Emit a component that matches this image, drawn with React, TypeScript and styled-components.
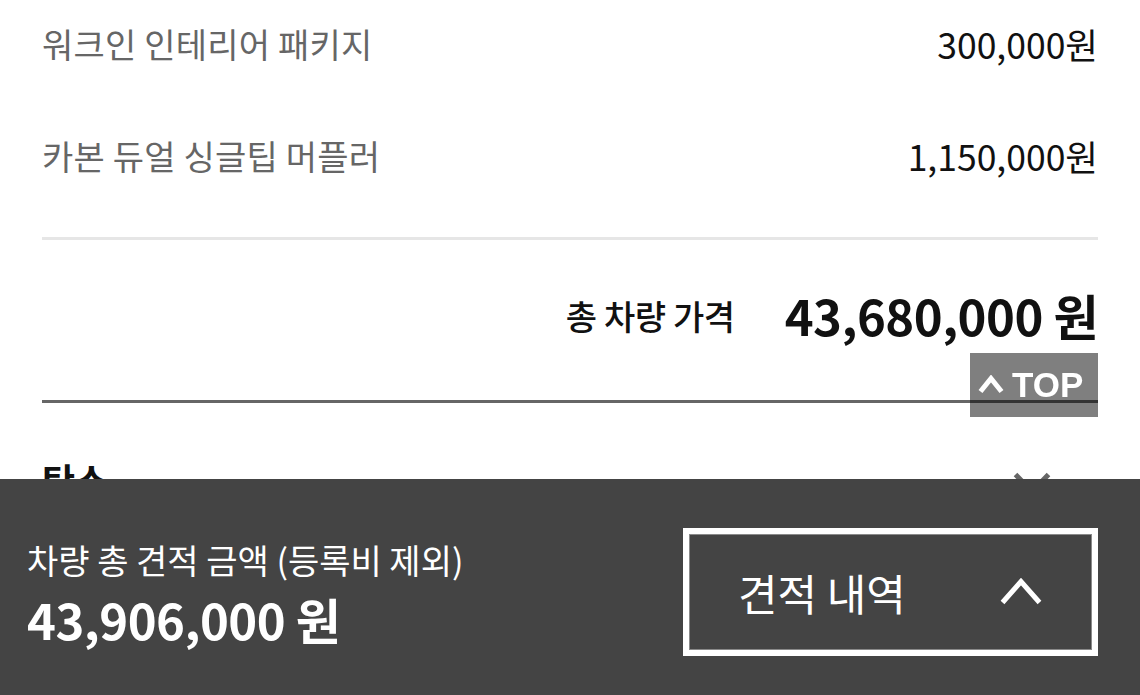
import * as React from 'react'
import styled, { createGlobalStyle } from 'styled-components'

const GlobalStyle = createGlobalStyle`
  html, body {
    margin: 0;
    padding: 0;
    background: #fff;
    overflow: hidden;
  }
  body {
    font-family: 'Noto Sans CJK KR', 'Noto Sans', sans-serif;
    color: #111;
  }
`

const Page = styled.div`
  width: 1140px;
  height: 695px;
  position: relative;
`

const Content = styled.div`
  padding: 0 42px;
  display: flex;
  flex-direction: column;
`

const ItemList = styled.ul`
  list-style: none;
  margin: 12px 0 0;
  padding: 0;
  display: flex;
  flex-direction: column;
  gap: 48px;
`

const ItemRow = styled.li`
  display: flex;
  justify-content: space-between;
  align-items: center;
  height: 64px;
`

const ItemName = styled.span`
  font-size: 34px;
  line-height: 1;
  color: #666;
  letter-spacing: 0.2px;
`

const ItemPrice = styled.span`
  font-size: 35.5px;
  line-height: 1;
  color: #111;
`

const Rule = styled.hr<{ $color: string; $gap: number }>`
  margin: ${(p) => p.$gap}px 0 0;
  border: 0;
  height: 3px;
  background: ${(p) => p.$color};
`

const TotalRow = styled.div`
  margin-top: 42px;
  height: 64px;
  display: flex;
  justify-content: flex-end;
  align-items: center;
  gap: 50px;
`

const TotalLabel = styled.span`
  font-size: 34px;
  font-weight: 500;
  line-height: 1;
  letter-spacing: -0.4px;
  padding-top: 4px;
`

const TotalPrice = styled.span`
  font-size: 49px;
  font-weight: 700;
  line-height: 1;
  letter-spacing: -0.5px;
`

const TopButton = styled.button`
  position: fixed;
  right: 42px;
  top: 353px;
  width: 128px;
  height: 64px;
  border: 0;
  padding: 0 0 0 7px;
  background: rgba(0, 0, 0, 0.5);
  color: #fff;
  display: flex;
  align-items: center;
  gap: 7px;
  font-family: 'Liberation Sans', Arial, sans-serif;
  font-size: 35px;
  font-weight: 700;
  z-index: 2;
`

const SectionHeader = styled.div`
  margin-top: 55px;
  display: flex;
  justify-content: space-between;
  align-items: flex-start;
`

const SectionTitle = styled.h3`
  margin: 0;
  font-size: 36px;
  font-weight: 700;
  line-height: 43px;
  color: #111;
`

const ChevronSlot = styled.span`
  margin: 13px 46px 0 0;
  display: flex;
`

const Footer = styled.footer`
  position: fixed;
  left: 0;
  right: 0;
  bottom: 0;
  height: 216px;
  box-sizing: border-box;
  padding: 49px 42px 39px 27px;
  background: #444;
  color: #fff;
  display: flex;
  justify-content: space-between;
  align-items: center;
  z-index: 3;
`

const Summary = styled.div`
  display: flex;
  flex-direction: column;
  gap: 12px;
  padding-top: 2px;
`

const SummaryLabel = styled.span`
  font-size: 34px;
  line-height: 1.2;
`

const SummaryPrice = styled.span`
  font-size: 49px;
  font-weight: 700;
  line-height: 1.1;
  letter-spacing: -0.5px;
`

const QuoteButton = styled.button`
  width: 415px;
  height: 128px;
  box-sizing: border-box;
  border: 6px solid #fff;
  box-shadow: inset 0 0 0 1px #8a8a8a;
  background: transparent;
  color: #fff;
  padding: 0 49px;
  display: flex;
  justify-content: space-between;
  align-items: center;
  font-family: inherit;
  font-size: 43px;
`

function Chevron({ up, w, h, color, sw }: { up: boolean; w: number; h: number; color: string; sw: number }) {
  const pad = sw / 2 + 1
  const pts = up
    ? `${pad},${h - pad} ${w / 2},${pad} ${w - pad},${h - pad}`
    : `${pad},${pad} ${w / 2},${h - pad} ${w - pad},${pad}`
  return (
    <svg width={w} height={h} viewBox={`0 0 ${w} ${h}`}>
      <polyline points={pts} fill="none" stroke={color} strokeWidth={sw} />
    </svg>
  )
}

const items = [
  { name: '워크인 인테리어 패키지', price: '300,000원' },
  { name: '카본 듀얼 싱글팁 머플러', price: '1,150,000원' },
]

export default function App() {
  return (
    <Page>
      <GlobalStyle />
      <Content>
        <ItemList>
          {items.map((it) => (
            <ItemRow key={it.name}>
              <ItemName>{it.name}</ItemName>
              <ItemPrice>{it.price}</ItemPrice>
            </ItemRow>
          ))}
        </ItemList>
        <Rule $color="#e6e6e6" $gap={49} />
        <TotalRow>
          <TotalLabel>총 차량 가격</TotalLabel>
          <TotalPrice>43,680,000 원</TotalPrice>
        </TotalRow>
        <Rule $color="#666" $gap={54} />
        <SectionHeader>
          <SectionTitle>탄소</SectionTitle>
          <ChevronSlot>
            <Chevron up={false} w={40} h={24} color="#666" sw={5} />
          </ChevronSlot>
        </SectionHeader>
      </Content>
      <TopButton>
        <Chevron up w={28} h={20} color="#fff" sw={5} />
        TOP
      </TopButton>
      <Footer>
        <Summary>
          <SummaryLabel>차량 총 견적 금액 (등록비 제외)</SummaryLabel>
          <SummaryPrice>43,906,000 원</SummaryPrice>
        </Summary>
        <QuoteButton>
          견적 내역
          <Chevron up w={44} h={28} color="#fff" sw={5} />
        </QuoteButton>
      </Footer>
    </Page>
  )
}
